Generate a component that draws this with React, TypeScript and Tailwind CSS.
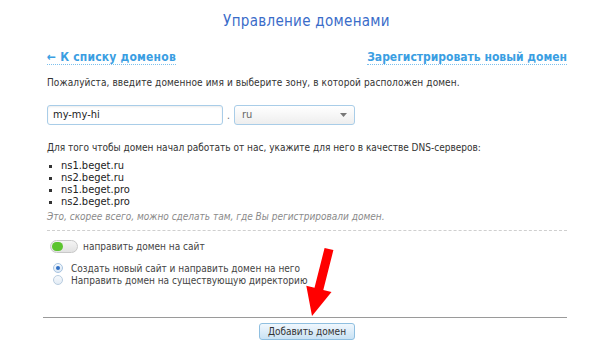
import React from 'react'

const servers = ['ns1.beget.ru', 'ns2.beget.ru', 'ns1.beget.pro', 'ns2.beget.pro']

const App = () => {
  return (
    <div className="relative w-[591px] h-[354px] bg-white overflow-hidden font-['DejaVu_Sans_Condensed','DejaVu_Sans',sans-serif] text-[#333]">
      {/* Title */}
      <div className="h-[42px] flex items-center justify-center pl-[22px]">
        <h1 className="text-[15px] text-[#3a6cc9] tracking-[0.3px]">Управление доменами</h1>
      </div>

      <div className="ml-[47px] w-[520px]">
        {/* Links */}
        <div className="mt-[8px] flex justify-between items-start">
          <a className="text-[12px] font-bold leading-[14px] tracking-[0.2px] text-[#3a9ee2] border-b border-dotted border-[#7cc0ee]">
            ← К списку доменов
          </a>
          <a className="text-[12px] font-bold leading-[14px] text-[#3a9ee2] border-b border-dotted border-[#7cc0ee]">
            Зарегистрировать новый домен
          </a>
        </div>

        <p className="mt-[12px] text-[10px] leading-[12px] tracking-[0.1px]">
          Пожалуйста, введите доменное имя и выберите зону, в которой расположен домен.
        </p>

        {/* Domain inputs */}
        <div className="mt-[16px] flex items-center h-[20px]">
          <div className="w-[176px] h-[20px] border border-[#a9cde8] rounded-[3px] shadow-[inset_0_1px_2px_rgba(0,0,0,0.08)] flex items-center px-[5px] text-[11px] text-[#222]">
            my-my-hi
          </div>
          <span className="w-[11px] text-center text-[10px] text-[#666]">.</span>
          <div className="w-[121px] h-[20px] border border-[#a9cde8] rounded-[3px] bg-gradient-to-b from-white to-[#eeeeee] flex items-center justify-between px-[7px] text-[11px] text-[#666]">
            <span>ru</span>
            <svg width="7" height="4" viewBox="0 0 7 4">
              <polygon points="0,0 7,0 3.5,4" fill="#777" />
            </svg>
          </div>
        </div>

        <p className="mt-[17px] text-[10px] leading-[12px]">
          Для того чтобы домен начал работать от нас, укажите для него в качестве DNS-серверов:
        </p>

        <ul className="mt-[6px]">
          {servers.map((s) => (
            <li key={s} className="flex items-center h-[12px] text-[11px] text-[#222]">
              <span className="w-[3px] h-[3px] bg-[#333] ml-[2px] mr-[9px]" />
              {s}
            </li>
          ))}
        </ul>

        <p className="mt-[3px] text-[10px] leading-[12px] italic text-[#8a8a8a]">
          Это, скорее всего, можно сделать там, где Вы регистрировали домен.
        </p>

        <div className="mt-[7px] border-t border-dashed border-[#cfcfcf]" />

        {/* Toggle */}
        <div className="mt-[9px] flex items-center h-[13px]">
          <div className="ml-[3px] w-[28px] h-[13px] rounded-full border border-[#c8c8c8] bg-gradient-to-b from-[#f4f4f4] to-[#e2e2e2] flex items-center px-[1px]">
            <span className="w-[11px] h-[9px] rounded-full bg-[#5cc42f]" />
          </div>
          <span className="ml-[5px] text-[10px] text-[#444]">направить домен на сайт</span>
        </div>

        {/* Radios */}
        <div className="mt-[9px]">
          <label className="flex items-center h-[12px] text-[10px] text-[#444]">
            <span className="ml-[6px] w-[10px] h-[10px] rounded-full border border-[#a8c4e0] bg-gradient-to-b from-[#f4f8fc] to-[#dbe8f5] flex items-center justify-center">
              <span className="w-[4px] h-[4px] rounded-full bg-[#2f6fc4]" />
            </span>
            <span className="ml-[8px]">Создать новый сайт и направить домен на него</span>
          </label>
          <label className="flex items-center h-[12px] text-[10px] text-[#444]">
            <span className="ml-[6px] w-[10px] h-[10px] rounded-full border border-[#b9cde0] bg-gradient-to-b from-[#f6f9fc] to-[#e3ecf5]" />
            <span className="ml-[8px]">Направить домен на существующую директорию</span>
          </label>
        </div>
      </div>

      {/* Footer */}
      <div className="ml-[43px] w-[524px] mt-[31px] border-t border-[#9a9a9a]" />
      <div className="mt-[5px] flex justify-center pl-[23px]">
        <button className="w-[96px] h-[17px] rounded-[3px] border border-[#8fbfe0] bg-gradient-to-b from-[#f0f7fd] to-[#c9e2f4] text-[10px] text-[#333] flex items-center justify-center">
          Добавить домен
        </button>
      </div>

      {/* Red arrow */}
      <svg className="absolute left-0 top-0 pointer-events-none" width="591" height="354">
        <polygon
          points="324.6,247.9 333.4,250.1 323.3,290 331.5,292.1 312,316 306.3,285.7 314.5,287.8"
          fill="#ff0000"
        />
      </svg>
    </div>
  )
}

export default App
